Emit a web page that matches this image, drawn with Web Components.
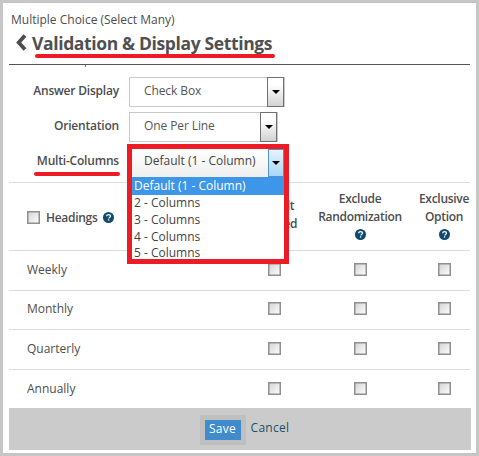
<!DOCTYPE html>
<html><head><meta charset="utf-8"><style>
html,body{margin:0;padding:0;background:#fff}
body{font-family:"Open Sans","Noto Sans",sans-serif;width:479px;height:456px;overflow:hidden}
</style></head><body>
<settings-dialog>
  <span slot="sub">Multiple Choice (Select Many)</span>
  <span slot="title">Validation &amp; Display Settings</span>
  <form-row slot="form" label="Answer Display" value="Check Box" w="156"></form-row>
  <form-row slot="form" label="Orientation" value="One Per Line" w="149"></form-row>
  <form-row slot="form" label="Multi-Columns" value="Default (1 - Column)" w="152" open underline></form-row>
  <option-table slot="table"></option-table>
</settings-dialog>
<script>
const CB=`<svg width="13" height="13" viewBox="0 0 13 13" style="display:block"><defs><linearGradient id="g" x1="0" y1="0" x2="1" y2="1"><stop offset="0" stop-color="#d2d2d2"/><stop offset="1" stop-color="#fff"/></linearGradient></defs><rect x=".75" y=".75" width="11.5" height="11.5" fill="url(#g)" stroke="#8f8f8f" stroke-width="1.5"/></svg>`;
const HELP=`<svg width="11" height="11" viewBox="0 0 11 11" style="display:block"><circle cx="5.5" cy="5.5" r="5.5" fill="#0d4a6e"/><path d="M3.6 4.3C3.7 3.2 4.5 2.6 5.6 2.6c1.1 0 1.9.6 1.9 1.5 0 .8-.5 1.1-1 1.4-.4.3-.6.5-.6 1" fill="none" stroke="#fff" stroke-width="1.3"/><rect x="4.9" y="7.3" width="1.3" height="1.3" fill="#fff"/></svg>`;
class SettingsDialog extends HTMLElement{constructor(){super();this.attachShadow({mode:'open'}).innerHTML=`<style>
:host{display:block;box-sizing:border-box;width:479px;height:456px;border:3px solid #c6c6c6;padding:9px 6px 3px 6px;position:relative;color:#4d4d4d}
.sub{font-size:12px;line-height:16px;padding-left:2px;height:17px}
.head{display:flex;align-items:center;gap:5px;padding-left:7px;height:27px}
.head svg{flex:none}
.title{font-size:17.5px;font-weight:700;line-height:26px;letter-spacing:-.37px;position:relative;white-space:nowrap;color:#505050;margin-top:1px}
.title i{position:absolute;left:3px;right:-3px;top:24px;height:4px;border-radius:2px;background:#ed1c24}
.rule{height:1px;background:#555;margin-top:8px;position:relative}
.rule b{position:absolute;left:76px;top:1px;width:1px;height:2px;background:#777}
.form{display:flex;flex-direction:column;padding-top:12px;gap:5px}
.foot{position:absolute;left:6px;right:5px;bottom:3px;height:42px;box-sizing:border-box;padding:2px 0 0 9px;background:#cbcbcb;display:flex;justify-content:center;align-items:center;gap:5px;font-size:12px}
.halo{background:#bfbfbf;padding:5px;display:block}
.save{display:block;background:#3f8bcb;color:#fff;width:36px;height:20px;line-height:18px;text-align:center;font-size:12px;letter-spacing:.3px}
.cancel{color:#1d4f68;margin-top:-5px;letter-spacing:.3px}
</style>
<div class="sub"><slot name="sub"></slot></div>
<div class="head"><svg width="11" height="17" viewBox="0 0 11 17"><path d="M9 1.5 2.7 8.5 9 15.5" fill="none" stroke="#4d4d4d" stroke-width="3.8"/></svg><div class="title"><slot name="title"></slot><i></i></div></div>
<div class="rule"><b></b></div>
<div class="form"><slot name="form"></slot></div>
<slot name="table"></slot>
<div class="foot"><span class="halo"><span class="save">Save</span></span><span class="cancel">Cancel</span></div>`}}
class FormRow extends HTMLElement{constructor(){super();this.attachShadow({mode:'open'})}
connectedCallback(){const a=n=>this.getAttribute(n),open=this.hasAttribute('open'),ul=this.hasAttribute('underline');
this.shadowRoot.innerHTML=`<style>
:host{display:flex;align-items:center;height:30px;position:relative;color:#4d4d4d}
.l{width:110px;text-align:right;font-size:12px;font-weight:600;letter-spacing:-.2px;position:relative;white-space:nowrap;margin-top:-4px}
.l i{position:absolute;right:-1px;width:86px;top:20px;height:4px;border-radius:2px;background:#ed1c24}
.s{margin-left:10px;box-sizing:border-box;height:100%;width:${a('w')}px;border:1px solid #c9c9c9;display:flex;align-items:center;background:#fff;position:relative;font-size:12px;padding:0 0 4px 14px;letter-spacing:-.1px;color:#555}
.b{position:absolute;right:0;top:-1px;bottom:-1px;width:17px;box-sizing:border-box;border:1px solid #707070;background:linear-gradient(#fff 25%,#d2d2d2);display:flex;align-items:center;justify-content:center}
.b::after{content:"";border:4px solid transparent;border-top:4px solid #000;border-bottom:0}
.open{background:linear-gradient(#fff,#efefef);border:0;height:28px;margin-left:13px;font-size:12px;padding:0 0 6px 12px;align-self:flex-start;margin-top:2px;color:#444;letter-spacing:0}
.open .b{border:1px solid #4e93c9;background:linear-gradient(#e6f3fc,#a9d6f7);top:0;bottom:0;right:0;width:16px}
.menu{position:absolute;left:0;top:28px;width:152px;background:#fff;font-size:12px;height:82px;z-index:2}
.menu div{padding-left:2px;height:17px;line-height:15px}
.menu .on{background:#3d96e8;color:#fff;height:18px;line-height:18px}
.menu .end{height:12px;line-height:12px;padding-top:1px}
.box{position:absolute;left:-5px;top:-5px;width:152px;height:110px;border:5px solid #ed1c24;pointer-events:none;z-index:3}
</style>
<div class="l">${a('label')}${ul?'<i></i>':''}</div>
<div class="s ${open?'open':''}">${a('value')}<span class="b"></span>
${open?`<div class="menu"><div class="on">Default (1 - Column)</div><div>2 - Columns</div><div>3 - Columns</div><div>4 - Columns</div><div class="end">5 - Columns</div></div><div class="box"></div>`:''}</div>`}}
class OptionTable extends HTMLElement{constructor(){super();const rows=['Weekly','Monthly','Quarterly','Annually'];this.attachShadow({mode:'open'}).innerHTML=`<style>
:host{display:block;color:#4d4d4d;font-size:12px;margin-top:5px}
.g{display:grid;grid-template-columns:237px 56px 116px 52px;width:461px}
.c{display:flex;flex-direction:column;align-items:center;justify-content:center;text-align:center;font-weight:600;letter-spacing:-.3px;line-height:18px;box-sizing:border-box;height:69px;border-top:1px solid #dcdcdc;border-bottom:1px solid #dcdcdc;white-space:nowrap;padding-bottom:3px}
.c svg{margin-top:3px}
.first{flex-direction:row;justify-content:flex-start;padding:2px 0 0 18px;gap:6px}
.first svg{margin-top:0}
.r{display:flex;align-items:center;height:39.67px;box-sizing:border-box;border-bottom:1px solid #dcdcdc;justify-content:center;padding-bottom:2px}
.r.n{justify-content:flex-start;padding-left:18px;font-weight:400}
.last{border-bottom:0}
</style><div class="g">
<div class="c first">${CB}<span>Headings</span>${HELP}</div>
<div class="c">Default<br>Selected</div>
<div class="c">Exclude<br>Randomization${HELP}</div>
<div class="c">Exclusive<br>Option${HELP}</div>
${rows.map((t,i)=>{const l=i==3?' last':'';return `<div class="r n${l}">${t}</div><div class="r${l}">${CB}</div><div class="r${l}">${CB}</div><div class="r${l}">${CB}</div>`}).join('')}
</div>`}}
customElements.define('settings-dialog',SettingsDialog);
customElements.define('form-row',FormRow);
customElements.define('option-table',OptionTable);
</script></body></html>
